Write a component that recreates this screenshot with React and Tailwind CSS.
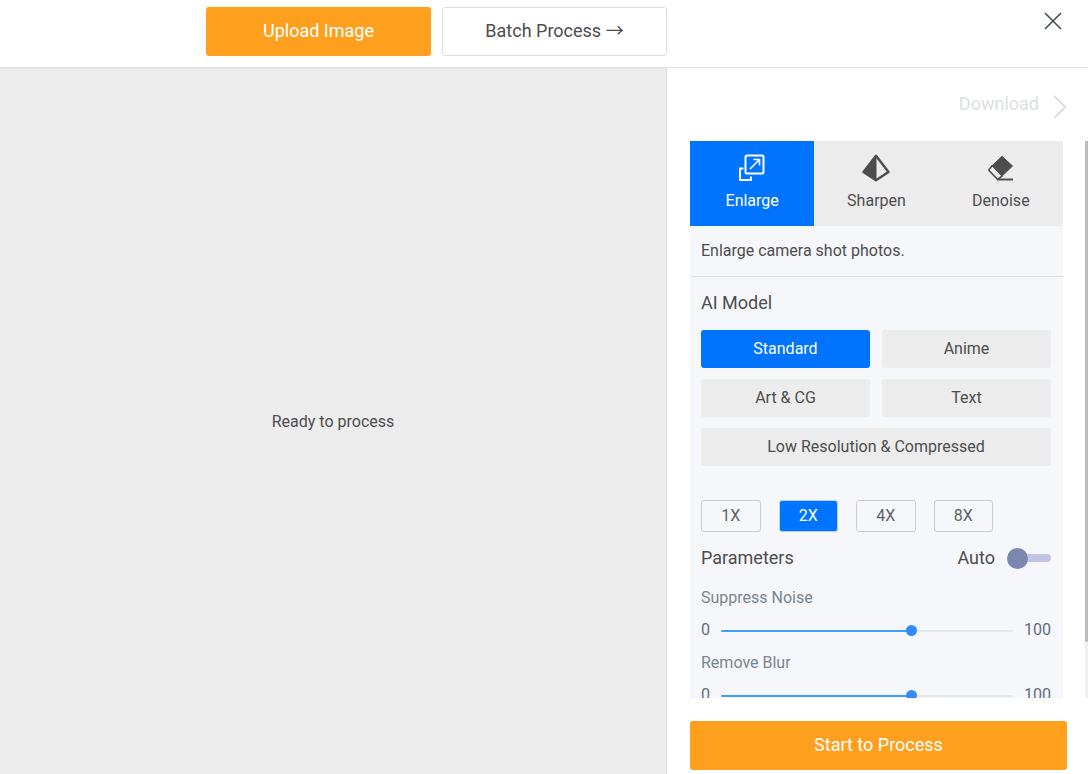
import { useState } from 'react';
import clsx from 'clsx';

const EnlargeIcon = () => (
  <svg width="28" height="28" viewBox="0 0 28 28" fill="none" stroke="currentColor" strokeWidth="2">
    <rect x="7.5" y="1.5" width="18" height="18" rx="1.5" />
    <path d="M5.5 14.5H2V26h11v-3.5" />
    <path d="M12 15l9-9M15.5 5.5h6v6" strokeWidth="1.6" />
  </svg>
);

const SharpenIcon = () => (
  <svg width="28" height="28" viewBox="0 0 28 28" fill="none" stroke="currentColor" strokeLinejoin="round">
    <path d="M14 1.8L1.5 18 14 26.2 26.5 18z" strokeWidth="2.4" />
    <path d="M14 1.5L1.3 18 14 26.5z" fill="currentColor" strokeWidth="1" />
  </svg>
);

const DenoiseIcon = () => (
  <svg width="28" height="28" viewBox="0 0 28 28" fill="none" stroke="currentColor">
    <path d="M15 2.3L25.5 12 15 22.2 5 11.8z" fill="currentColor" strokeLinejoin="round" />
    <path d="M5.5 11.5L2.2 15.2q-.7.8 0 1.6l8.6 8.8 4.4-4" strokeWidth="1.6" />
    <path d="M10.5 25.5H26" strokeWidth="2" />
  </svg>
);

const TABS = [
  { name: 'Enlarge', Icon: EnlargeIcon },
  { name: 'Sharpen', Icon: SharpenIcon },
  { name: 'Denoise', Icon: DenoiseIcon },
];

const MODELS = ['Standard', 'Anime', 'Art & CG', 'Text', 'Low Resolution & Compressed'];
const SCALES = ['1X', '2X', '4X', '8X'];

const ParamSlider = ({ id, label }) => {
  const [value, setValue] = useState(66);

  return (
    <div className="mb-2">
      <label htmlFor={id} className="block leading-[26px] text-[#7a858f]">{label}</label>
      <div className="mt-[6px] flex items-center leading-[25px] text-[#5e6d82]">
        <span className="w-5">0</span>
        <input
          id={id}
          type="range"
          min="0"
          max="100"
          value={value}
          onChange={(e) => setValue(Number(e.target.value))}
          className="mt-[2px] h-[2px] min-w-0 flex-1 cursor-pointer appearance-none rounded-full [&::-webkit-slider-thumb]:size-[11px] [&::-webkit-slider-thumb]:appearance-none [&::-webkit-slider-thumb]:rounded-full [&::-webkit-slider-thumb]:bg-[#338aff]"
          style={{ background: `linear-gradient(to right, #409eff ${value}%, #e4e7ed ${value}%)` }}
        />
        <span className="w-[38px] text-right">100</span>
      </div>
    </div>
  );
};

const App = () => {
  const [tab, setTab] = useState('Enlarge');
  const [model, setModel] = useState('Standard');
  const [scale, setScale] = useState('2X');
  const [auto, setAuto] = useState(false);

  return (
    <div className="flex h-screen flex-col bg-white font-[Roboto,sans-serif] text-base text-[#4d4d4d]">
      {/* Top bar */}
      <header className="flex shrink-0 border-b border-[#dcdfe0] pt-[7px] pb-[11px]">
        <div className="flex flex-1 justify-end gap-[11px]">
          <button className="h-[49px] w-[225px] rounded-[3px] bg-[#ff9f1e] pb-[2px] text-lg text-white">
            Upload Image
          </button>
          <button className="h-[49px] w-[225px] rounded-[3px] border border-[#dcdfe0] pb-[2px] text-lg">
            Batch Process <span className="font-['Noto_Sans_CJK_SC',sans-serif] leading-none">→</span>
          </button>
        </div>
        <div className="flex w-[421px] items-start justify-end pt-[5px] pr-[26px]">
          <button aria-label="Close">
            <svg width="18" height="18" viewBox="0 0 18 18" stroke="#414b50" strokeWidth="1.6">
              <path d="M1 1l16 16M17 1L1 17" />
            </svg>
          </button>
        </div>
      </header>

      <div className="flex min-h-0 flex-1">
        {/* Preview */}
        <main className="flex flex-1 items-center justify-center border-r border-[#dcdfe0] bg-[#ececec]">
          <p className="pt-[2px]">Ready to process</p>
        </main>

        {/* Settings */}
        <aside className="flex w-[421px] flex-col">
          <div className="flex h-[73px] shrink-0 justify-end pt-[22px] pr-[21px]">
            <button disabled className="flex h-7 items-start gap-[14px] text-lg text-[#dcdfe0]">
              Download
              <svg width="14" height="24" viewBox="0 0 14 24" fill="none" stroke="currentColor" strokeWidth="2" className="mt-[5px]">
                <path d="M1 1l11.5 11L1 23" />
              </svg>
            </button>
          </div>

          <div className="flex min-h-0 flex-1 pl-[23px]">
            <div className="min-w-0 flex-1 overflow-y-auto bg-[#f5f7fb] [scrollbar-width:none]">
              <div className="grid grid-cols-3 bg-[#ececec]">
                {TABS.map(({ name, Icon }) => (
                  <button
                    key={name}
                    onClick={() => setTab(name)}
                    className={clsx(
                      'flex h-[85px] flex-col items-center gap-[7px] pt-[13px]',
                      tab === name && 'bg-[#0074ff] text-white'
                    )}
                  >
                    <Icon />
                    {name}
                  </button>
                ))}
              </div>

              <p className="border-b border-[#dcdfe0] py-[13px] pl-[11px]">Enlarge camera shot photos.</p>

              <div className="pr-3 pl-[11px]">
                <h2 className="pt-3 pb-[13px] text-lg">AI Model</h2>
                <div className="grid grid-cols-2 gap-x-3 gap-y-[11px]">
                  {MODELS.map((name) => (
                    <button
                      key={name}
                      onClick={() => setModel(name)}
                      className={clsx(
                        'h-[38px] rounded-[3px] last:col-span-2',
                        model === name ? 'bg-[#0074ff] text-white' : 'bg-[#ececec]'
                      )}
                    >
                      {name}
                    </button>
                  ))}
                </div>

                <div className="mt-[34px] grid w-[292px] grid-cols-4 gap-[18px]">
                  {SCALES.map((name) => (
                    <button
                      key={name}
                      onClick={() => setScale(name)}
                      className={clsx(
                        'h-8 rounded-[3px] border',
                        scale === name
                          ? 'border-[#b3d5ff] bg-[#0074ff] text-white'
                          : 'border-[#cccccc] text-[#606266]'
                      )}
                    >
                      {name}
                    </button>
                  ))}
                </div>

                <div className="mt-3 mb-[13px] flex items-center justify-between text-lg">
                  <h2>Parameters</h2>
                  <label className="flex items-center gap-3">
                    Auto
                    <input
                      type="checkbox"
                      role="switch"
                      checked={auto}
                      onChange={(e) => setAuto(e.target.checked)}
                      className="relative flex h-5 w-11 cursor-pointer appearance-none items-center before:z-10 before:size-[21px] before:shrink-0 before:rounded-full before:bg-[#7a88b0] after:absolute after:right-0 after:h-2 after:w-8 after:rounded-full after:bg-[#bfc5e2] checked:before:ml-auto checked:before:bg-[#0074ff]"
                    />
                  </label>
                </div>

                <ParamSlider id="noise" label="Suppress Noise" />
                <ParamSlider id="blur" label="Remove Blur" />
              </div>
            </div>

            {/* Scrollbar */}
            <div className="ml-[22px] w-[3px] bg-[#f0f0f0]">
              <div className="h-9/10 rounded-b-full bg-[#bcbcbc]" />
            </div>
          </div>

          <div className="shrink-0 pt-[23px] pr-[21px] pb-1 pl-[23px]">
            <button className="h-[49px] w-full rounded-[3px] bg-[#ff9f1e] pb-[2px] text-lg text-white">
              Start to Process
            </button>
          </div>
        </aside>
      </div>
    </div>
  );
};

export default App;
